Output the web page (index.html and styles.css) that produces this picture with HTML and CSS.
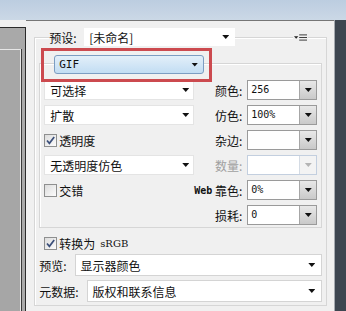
FILE: index.html
```html
<!DOCTYPE html>
<html lang="zh-CN">
<head>
    <meta charset="UTF-8">
    <title>存储为 Web 所用格式</title>
    <link rel="stylesheet" href="styles.css">
</head>
<body>
<div class="screen">
    <div class="titlebar"></div>

    <div class="workspace">
        <!-- 左侧预览区的边缘 -->
        <div class="preview-edge">
            <div class="preview-frame">
                <div class="preview-inner"></div>
            </div>
        </div>

        <!-- 优化设置面板 -->
        <div class="panel">
            <div class="settings-box">
                <div class="preset-row">
                    <span class="preset-label">预设:</span>
                    <div class="combo preset">
                        <span>[未命名]</span>
                        <i class="arrow"></i>
                    </div>
                    <svg class="panel-menu" width="15" height="7" viewBox="0 0 15 7">
                        <path d="M0 2h5l-2.5 3z" fill="#222"/>
                        <path d="M6 0.5h9M6 3.5h9M6 6.5h9" stroke="#222" stroke-width="1"/>
                    </svg>
                </div>

                <div class="options-box">
                    <div class="format-select">
                        <span class="mono">GIF</span>
                        <i class="arrow"></i>
                    </div>
                    <div class="highlight"></div>

                    <div class="options-grid">
                        <!-- 第1行 -->
                        <div class="combo flat"><span>可选择</span><i class="arrow"></i></div>
                        <span class="opt-label">颜色:</span>
                        <div class="spin"><span class="mono">256</span><b class="spin-btn"><i class="arrow"></i></b></div>

                        <!-- 第2行 -->
                        <div class="combo flat"><span>扩散</span><i class="arrow"></i></div>
                        <span class="opt-label">仿色:</span>
                        <div class="spin"><span class="mono">100%</span><b class="spin-btn"><i class="arrow"></i></b></div>

                        <!-- 第3行 -->
                        <label class="check-row">
                            <span class="checkbox">
                                <svg width="11" height="11" viewBox="0 0 11 11"><path d="M2 5.5l2.4 2.8L9.2 2" fill="none" stroke="#3b4f7a" stroke-width="1.7"/></svg>
                            </span>
                            透明度
                        </label>
                        <span class="opt-label">杂边:</span>
                        <div class="spin"><span></span><b class="spin-btn"><i class="arrow"></i></b></div>

                        <!-- 第4行 -->
                        <div class="combo flat"><span>无透明度仿色</span><i class="arrow"></i></div>
                        <span class="opt-label disabled">数量:</span>
                        <div class="spin is-disabled"><span></span><b class="spin-btn"><i class="arrow"></i></b></div>

                        <!-- 第5行 -->
                        <label class="check-row">
                            <span class="checkbox"></span>
                            交错
                        </label>
                        <span class="opt-label"><span class="mono web">Web</span>&nbsp;靠色:</span>
                        <div class="spin"><span class="mono">0%</span><b class="spin-btn"><i class="arrow"></i></b></div>

                        <!-- 第6行 -->
                        <div></div>
                        <span class="opt-label">损耗:</span>
                        <div class="spin"><span class="mono">0</span><b class="spin-btn"><i class="arrow"></i></b></div>
                    </div>
                </div>

                <label class="check-row srgb">
                    <span class="checkbox">
                        <svg width="11" height="11" viewBox="0 0 11 11"><path d="M2 5.5l2.4 2.8L9.2 2" fill="none" stroke="#3b4f7a" stroke-width="1.7"/></svg>
                    </span>
                    转换为 <span class="mono srgb-text">sRGB</span>
                </label>

                <div class="field-row">
                    <span>预览:</span>
                    <div class="combo wide"><span>显示器颜色</span><i class="arrow"></i></div>
                </div>
                <div class="field-row">
                    <span>元数据:</span>
                    <div class="combo wide"><span>版权和联系信息</span><i class="arrow"></i></div>
                </div>
            </div>
        </div>

        <div class="right-edge"></div>
    </div>
</div>
</body>
</html>
```

FILE: styles.css
```css
/* 基本 */
* {
    box-sizing: border-box;
}

body {
    margin: 0;
    font-family: "Noto Sans CJK SC", "Liberation Sans", sans-serif;
    font-size: 12px;
    color: #111;
    background-color: #f0f0f0;
}

.mono {
    font-family: "DejaVu Sans Mono", "Liberation Mono", monospace;
    font-size: 10px;
}

.screen {
    width: 346px;
    height: 311px;
    display: flex;
    flex-direction: column;
    overflow: hidden;
}

.titlebar {
    height: 20px;
    flex: none;
    background: linear-gradient(#bccde0, #cbd8e6);
}

.workspace {
    flex: 1;
    display: flex;
}

/* 左边的预览图边框 */
.preview-edge {
    width: 27px;
    padding-top: 7px;
    background-color: #f0f0f0;
}

.preview-frame {
    height: 100%;
    padding-top: 21px;
    background-color: #a9a9a9;
    border-top: 1px solid #2a2a2a;
    border-right: 1px solid #2a2a2a;
}

.preview-inner {
    width: 21px;
    height: 100%;
    border-top: 1px solid #e6e6e6;
    border-right: 1px solid #e6e6e6;
    box-shadow: 1px 0 0 #3a3a3a;
    background-color: #a6a6a6;
}

/* 右侧深色边 */
.right-edge {
    width: 12px;
    background-color: #3d4650;
    border-left: 1px solid #a5aab0;
}

/* --- 设置面板 --- */
.panel {
    flex: 1;
    background-color: #f0f0f0;
    border-top: 1px solid #767676;
    padding: 0 7px 0 8px;
}

.settings-box {
    margin-top: 16px;
    padding: 0 4px 3px 4px;
    border: 1px solid #d6d6d6;
    box-shadow: inset 1px 1px 0 #fff;
}

.preset-row {
    display: flex;
    align-items: center;
    height: 18px;
    margin-top: -10px;
    padding-left: 10px;
}

.preset-label {
    width: 35px;
    background-color: #f0f0f0;
}

.combo {
    display: flex;
    align-items: center;
    justify-content: space-between;
    background-color: #fff;
    padding: 0 6px 0 5px;
}

.combo.preset {
    width: 151px;
    height: 18px;
}

.panel-menu {
    margin-left: auto;
    margin-right: 14px;
    padding: 0 1px;
    background-color: #f0f0f0;
}

.arrow {
    display: block;
    width: 7px;
    height: 4px;
    background-color: #111;
    clip-path: polygon(0 0, 100% 0, 50% 100%);
}

/* 内侧分组框 */
.options-box {
    position: relative;
    margin-top: 17px;
    padding: 0 4px 2px 4px;
    border: 1px solid #d6d6d6;
    box-shadow: inset 1px 1px 0 #fff;
}

.format-select {
    display: flex;
    align-items: center;
    justify-content: space-between;
    width: 150px;
    height: 19px;
    margin: -9px 0 0 10px;
    padding: 0 5px 0 4px;
    border: 1px solid #7c9dc2;
    border-radius: 3px;
    background: linear-gradient(#e3eff9, #c2ddf3);
}

.format-select .mono {
    font-size: 11px;
}

/* 红色标注框 */
.highlight {
    position: absolute;
    left: 1px;
    top: -16px;
    width: 171px;
    height: 34px;
    border: 3px solid #cc4a4f;
}

.options-grid {
    display: grid;
    grid-template-columns: 150px 1fr 70px;
    grid-auto-rows: 20px;
    row-gap: 5px;
    margin-top: 6px;
}

.combo.flat {
    border: 1px solid #e4e4e4;
    padding-right: 4px;
}

.opt-label {
    display: flex;
    align-items: center;
    justify-content: flex-end;
    white-space: nowrap;
    padding-right: 5px;
}

.opt-label.disabled {
    color: #a0a0a0;
}

.mono.web {
    font-weight: bold;
}

.spin {
    display: flex;
    border: 1px solid #9a9a9a;
    background-color: #fff;
}

.spin span {
    flex: 1;
    padding-left: 3px;
    line-height: 18px;
}

.spin-btn {
    width: 17px;
    display: flex;
    align-items: center;
    justify-content: center;
    border-left: 1px solid #a6a6a6;
    background: linear-gradient(#e8e8e8, #c9c9c9);
}

.spin.is-disabled {
    border-color: #c3cfdf;
}

.spin.is-disabled .spin-btn {
    border-left-color: #d4dbe4;
    background: #f3f3f3;
}

.spin.is-disabled .arrow {
    background-color: #b4b4b4;
}

/* 复选框 */
.check-row {
    display: flex;
    align-items: center;
    gap: 2px;
}

.checkbox {
    width: 13px;
    height: 13px;
    display: flex;
    align-items: center;
    justify-content: center;
    border: 1px solid #8e8f8f;
    background: linear-gradient(135deg, #dcdcdc, #fcfcfc);
}

.check-row.srgb {
    height: 14px;
    margin-top: 8px;
    padding-left: 5px;
}

.srgb-text {
    font-family: "DejaVu Serif", "Liberation Serif", serif;
    margin-left: 3px;
}

.field-row {
    display: flex;
    align-items: center;
    gap: 8px;
    margin-top: 4px;
}

.combo.wide {
    flex: 1;
    height: 22px;
    border: 1px solid #d4d4d4;
}
```
